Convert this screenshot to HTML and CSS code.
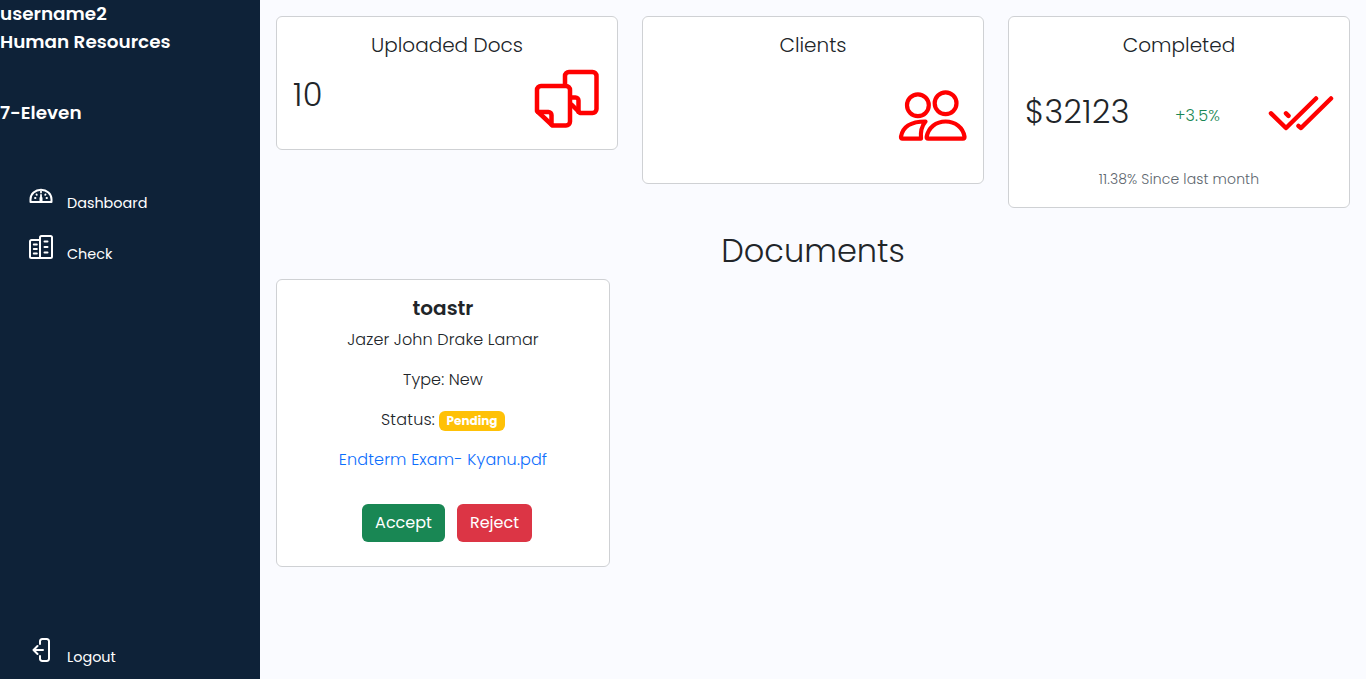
FILE: index.html
```
<!DOCTYPE html>
<html lang="en">
<head>
<meta charset="utf-8">
<title>Dashboard</title>
<link rel="stylesheet" href="styles.css">
</head>
<body>
<aside class="sidebar">
  <div class="profile">
    <p>username2</p>
    <p>Human Resources</p>
    <p class="company">7-Eleven</p>
  </div>
  <nav class="menu">
    <a class="menu-item">
      <svg class="menu-icon" viewBox="0 0 24 24"><path d="M1.500 18v-2.700a10.500 9.500 0 0 1 21 0V18z"/><path d="M12 17v-3" stroke-width="3"/><path d="M12 13v-2M12 7.500v1M6 14h.5M17.500 14h.5M7.500 10.500l.3.3M16.500 10.500l-.3.3" stroke-width="1.800"/></svg>
      <span>Dashboard</span>
    </a>
    <a class="menu-item">
      <svg class="menu-icon" viewBox="0 0 24 24"><path d="M11 23H2.500a1.500 1.500 0 0 1-1.500-1.500v-15A1.500 1.500 0 0 1 2.500 5H11M11 23V2.500A1.500 1.500 0 0 1 12.500 1h9A1.500 1.500 0 0 1 23 2.500v19a1.500 1.500 0 0 1-1.500 1.500z"/><path d="M4.800 9.500h3M4.800 14h3M4.800 18.500h3M15.500 6.500h3M15.500 12h3M15.500 17.500h3" stroke-width="2"/></svg>
      <span>Check</span>
    </a>
    <a class="menu-item logout">
      <svg class="menu-icon" viewBox="0 0 24 24"><path d="M11 6V3.500A2.300 2.300 0 0 1 13.300 1h4.400A2.300 2.300 0 0 1 20 3.500v17a2.300 2.300 0 0 1-2.300 2.500h-4.400a2.300 2.300 0 0 1-2.300-2.500V18M4.500 12H14M8.500 8L4.500 12l4 4"/></svg>
      <span>Logout</span>
    </a>
  </nav>
</aside>
<main class="content">
  <section class="stats">
    <article class="card stat uploaded">
      <h5 class="card-title">Uploaded Docs</h5>
      <div class="row">
        <span class="value">10</span>
        <svg class="icon docs-icon" viewBox="0 0 66 60"><path d="M30 16V7a4 4 0 0 1 4-4h23.500a4 4 0 0 1 4 4v33a4 4 0 0 1-4 4H45L37 36"/><path d="M37 28.500h3.500a3 3 0 0 1 3 3V43"/><path d="M6 17h25a4 4 0 0 1 4 4v31.500a4 4 0 0 1-4 4H17.500L2 42V21a4 4 0 0 1 4-4z"/><path d="M3 43h10.500a3 3 0 0 1 3 3v9.500"/></svg>
      </div>
    </article>
    <article class="card stat clients">
      <h5 class="card-title">Clients</h5>
      <div class="row">
        <svg class="icon people-icon" viewBox="0 0 70 54"><circle cx="20.900" cy="17.200" r="10.900"/><circle cx="48.600" cy="15.200" r="10.900"/><path d="M24 50.700H5.500q-1.700 0-1.500-2C5.500 39.500 13 33.500 28.500 33.500Q23 40 24 50.700zM31.200 50.700q-1.800 0-1.500-2C31.500 39.500 39 33.500 48.600 33.500S66 39.500 67.500 48.700q.2 2-1.500 2z"/></svg>
      </div>
    </article>
    <article class="card stat completed">
      <h5 class="card-title">Completed</h5>
      <div class="row">
        <span class="value money">$32123</span>
        <span class="growth">+3.5%</span>
        <svg class="icon tick-icon" viewBox="0 0 66 36"><path d="M4 18.300l15 14.700L49 3.500M19 18.300l2.500 2.500M31.500 31l2.500 2L64 3.500"/></svg>
      </div>
      <p class="note">11.38% Since last month</p>
    </article>
  </section>
  <h2 class="heading">Documents</h2>
  <article class="card document">
    <h5 class="doc-title">toastr</h5>
    <p class="doc-line">Jazer John Drake Lamar</p>
    <p class="doc-line">Type: New</p>
    <p class="doc-line status"><span>Status:</span><span class="badge">Pending</span></p>
    <p class="doc-line"><a class="link">Endterm Exam- Kyanu.pdf</a></p>
    <div class="actions">
      <button class="btn accept">Accept</button>
      <button class="btn reject">Reject</button>
    </div>
  </article>
</main>
</body>
</html>
```
FILE: styles.css
```
* { box-sizing: border-box; }
body {
  margin: 0;
  display: flex;
  height: 679px;
  overflow: hidden;
  background: #fafbff;
  color: #212529;
  font: 300 16px/24px Poppins, Inter, "Open Sans", sans-serif;
}
h2, h5, p { margin: 0; font-weight: inherit; }
.sidebar {
  width: 260px;
  height: 679px;
  display: flex;
  flex-direction: column;
  background: #0e2238;
  color: #fff;
}
.profile { height: 173px; font-size: 18.4px; font-weight: 600; line-height: 28px; }
.company { margin-top: 43px; }
.menu {
  flex: 1;
  display: flex;
  flex-direction: column;
  padding-left: 29px;
  font-size: 14.4px;
  font-weight: 400;
}
.menu-item { display: flex; height: 51px; gap: 14px; padding-top: 11px; line-height: 39px; }
.menu-icon { width: 24px; height: 24px; fill: none; stroke: #fff; stroke-width: 2; stroke-linejoin: round; stroke-linecap: round; }
.logout { margin-top: auto; margin-bottom: 1px; }
.content { flex: 1; padding: 16px; }
.stats { display: grid; grid-template-columns: repeat(3, 342px); gap: 24px; align-items: start; height: 216px; }
.card { background: #fff; border: 1px solid #cfd1d4; border-radius: 6px; }
.stat { padding: 16px; }
.uploaded { height: 134px; }
.clients { height: 168px; }
.completed { height: 192px; }
.card-title { font-size: 20px; text-align: center; line-height: 24px; }
.row { display: flex; align-items: center; }
.uploaded .row { height: 76px; justify-content: space-between; }
.clients .row { height: 116px; justify-content: flex-end; }
.completed .row { height: 110px; justify-content: space-between; }
.value { font-size: 32px; letter-spacing: 0.4px; }
.growth { color: #198754; letter-spacing: 0.15px; padding: 8px 2px 0 0; }
.icon { fill: none; stroke: #f00; stroke-width: 4.5; stroke-linecap: round; stroke-linejoin: round; overflow: visible; }
.docs-icon { width: 66px; height: 60px; margin-top: 8px; }
.people-icon { width: 70px; height: 54px; stroke-width: 4.2; }
.tick-icon { width: 66px; height: 36px; margin-top: 2px; }
.note { color: #5d666e; font-size: 14px; letter-spacing: 0.13px; text-align: center; }
.heading { height: 47px; font-size: 32px; line-height: 38px; text-align: center; }
.document { width: 334px; height: 288px; padding: 16px; text-align: center; }
.doc-title { font-size: 20px; font-weight: 600; line-height: 24px; margin-bottom: 8px; }
.doc-line { height: 24px; margin-bottom: 16px; letter-spacing: 0.1px; }
.status { display: flex; justify-content: center; gap: 4px; letter-spacing: 0.2px; }
.badge {
  width: 66px;
  height: 20px;
  margin-top: 3px;
  border-radius: 6px;
  background: #ffc107;
  color: #fff;
  font-size: 12px;
  font-weight: 700;
  letter-spacing: 0;
  line-height: 20px;
}
.link { color: #0d6efd; letter-spacing: 0.15px; }
.actions { display: flex; gap: 12px; padding-left: 69px; margin-top: 32px; }
.btn { height: 38px; border: 0; border-radius: 6px; padding: 0; color: #fff; font: 400 16px/24px Poppins, Inter, sans-serif; }
.accept { width: 83px; background: #198754; }
.reject { width: 75px; background: #dc3545; }
```
